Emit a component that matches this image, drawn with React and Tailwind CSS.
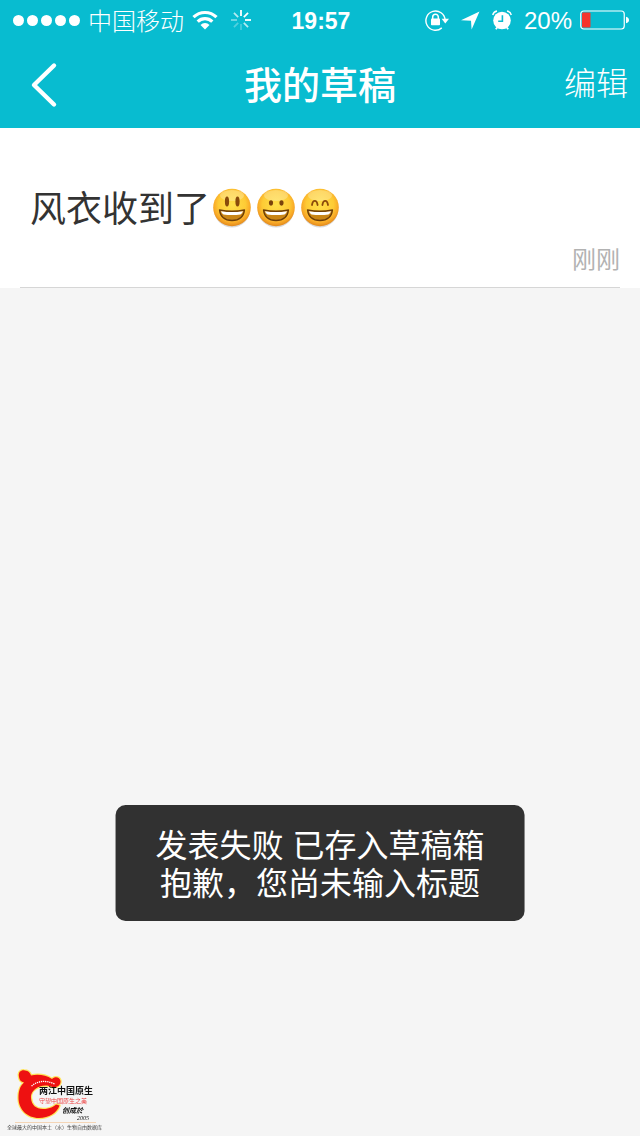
import React from 'react';

const drafts = [
  { id: 1, text: '风衣收到了', emojis: ['open', 'grin', 'smile'], time: '刚刚' },
];

const emojiNames = { open: '大笑', grin: '咧嘴笑', smile: '眯眼笑' };

const WifiIcon = () => (
  <svg viewBox="0 0 26 20" className="h-5 w-[26px]" fill="none" stroke="white" strokeWidth="3.2" aria-hidden="true">
    <path d="M1.5 7.2a16.4 16.4 0 0 1 23 0" />
    <path d="M5.7 11.6a10.4 10.4 0 0 1 14.6 0" />
    <path d="M13 19.5l-4.5-4.6a6.4 6.4 0 0 1 9 0z" fill="white" stroke="none" />
  </svg>
);

const spokes = [1, 1, 1, 0.7, 0.25, 0.3, 0.45, 0.7];

const Spinner = () => (
  <svg viewBox="0 0 22 22" className="size-[22px]" stroke="white" strokeWidth="1.8" aria-hidden="true">
    {spokes.map((opacity, i) => (
      <path key={i} d="M11 1v6" opacity={opacity} transform={`rotate(${i * 45} 11 11)`} />
    ))}
  </svg>
);

const RotationLockIcon = () => (
  <svg viewBox="0 0 24 22" className="h-[22px] w-6" fill="none" stroke="white" aria-hidden="true">
    <path d="M16.8 18.9A9.6 9.6 0 1 1 20.1 11" strokeWidth="1.4" />
    <path d="M16.6 9.8h7.4l-3.7 4.8z" fill="white" stroke="none" />
    <rect x="6" y="9.5" width="9" height="6.8" rx="0.8" fill="white" stroke="none" />
    <path d="M7.7 10V8a2.8 2.8 0 0 1 5.6 0v2" strokeWidth="1.5" />
  </svg>
);

const LocationIcon = () => (
  <svg viewBox="0 0 19 19" className="size-[19px]" fill="white" aria-hidden="true">
    <path d="M18.5.5L10.6 18.6 10 9.8 0 9.2z" />
  </svg>
);

const AlarmIcon = () => (
  <svg viewBox="0 0 20 20" className="size-5" fill="none" aria-hidden="true">
    <circle cx="10" cy="10.5" r="8.8" fill="white" />
    <path d="M10.4 5.2v6.1H6.2" stroke="#08bcd0" strokeWidth="1.6" />
    <path d="M.7 5Q1.4 1.7 5 .9M19.3 5Q18.6 1.7 15 .9" stroke="white" strokeWidth="1.5" />
    <path d="M5.4 17.2l-1.6 2.1M14.6 17.2l1.6 2.1" stroke="white" strokeWidth="1.8" />
  </svg>
);

const BatteryIcon = () => (
  <svg viewBox="0 0 49 20" className="h-5 w-[49px]" aria-hidden="true">
    <rect x="0.75" y="1" width="43.5" height="18" rx="3" fill="none" stroke="white" strokeWidth="1.2" />
    <rect x="2" y="2.5" width="8.5" height="15" rx="1" fill="#f5342b" />
    <path d="M46 6.7q3 .8 3 3.3t-3 3.3z" fill="white" />
  </svg>
);

const StatusBar = () => (
  <div className="grid h-10 grid-cols-[1fr_auto_1fr] items-center pr-[11px] pl-[13px]">
    <div className="flex items-center">
      <div className="flex gap-[3px]">
        {[1, 2, 3, 4, 5].map((dot) => (
          <span key={dot} className="size-[11px] rounded-full bg-white" />
        ))}
      </div>
      <span className="ml-2 pt-1 text-2xl font-light">中国移动</span>
      <div className="ml-2 flex items-center gap-3">
        <WifiIcon />
        <Spinner />
      </div>
    </div>
    <span className="pt-[2px] text-[23px] font-bold">19:57</span>
    <div className="flex items-center justify-end">
      <div className="flex items-center gap-3">
        <RotationLockIcon />
        <LocationIcon />
        <AlarmIcon />
        <span className="pt-[2px] text-2xl">20%</span>
      </div>
      <span className="ml-2">
        <BatteryIcon />
      </span>
    </div>
  </div>
);

const NavBar = () => (
  <div className="grid h-[88px] grid-cols-[1fr_auto_1fr] items-center px-3">
    <button type="button" aria-label="返回" className="justify-self-start pl-4">
      <svg viewBox="0 0 32 48" className="h-12 w-8" fill="none" stroke="white" strokeWidth="4.4" strokeLinecap="round" strokeLinejoin="round">
        <path d="M26 5.5L6 25l20 19.5" />
      </svg>
    </button>
    <h1 className="pt-1 text-[38px] font-medium">我的草稿</h1>
    <button type="button" className="justify-self-end text-[32px] font-light">
      编辑
    </button>
  </div>
);

const Emoji = ({ type }) => (
  <svg viewBox="0 0 44 44" className="size-11" role="img" aria-label={emojiNames[type]}>
    <defs>
      <radialGradient id={`face-${type}`} cx="0.5" cy="0.42" r="0.6">
        <stop offset="0" stopColor="#ffe04a" />
        <stop offset="0.6" stopColor="#fecb35" />
        <stop offset="0.8" stopColor="#f9ab28" />
        <stop offset="1" stopColor="#dc7f1a" />
      </radialGradient>
    </defs>
    <ellipse cx="22" cy="23.5" rx="18" ry="18" fill="#000" opacity="0.15" />
    <circle cx="22" cy="21.5" r="18.8" fill={`url(#face-${type})`} />
    <ellipse cx="22" cy="9.5" rx="12" ry="5.5" fill="#fff" opacity="0.25" />
    {type === 'open' && (
      <g fill="#8a4b0b">
        <ellipse cx="17" cy="15.5" rx="2.1" ry="5" />
        <ellipse cx="27.5" cy="15.5" rx="2.1" ry="5" />
      </g>
    )}
    {type === 'grin' && (
      <g fill="#7a430c">
        <ellipse cx="17" cy="17" rx="2.1" ry="2.7" />
        <ellipse cx="27.5" cy="17" rx="2.1" ry="2.7" />
      </g>
    )}
    {type === 'smile' && (
      <g fill="none" stroke="#8a4b0b" strokeWidth="1.8" strokeLinecap="round">
        <path d="M14 19q.6-4.2 2.8-4.2t2.8 4.2" />
        <path d="M24.4 19q.6-4.2 2.8-4.2t2.8 4.2" />
      </g>
    )}
    <path d="M9.5 24q12.500 2.5 25 0-1.3 10.5-12.5 10.5T9.5 24z" fill="#c98516" stroke="#6b3c08" strokeWidth="1.3" strokeLinejoin="round" />
    <path d="M11 25.200q11 1.7 22 0-.8 2.500-2.5 3.200-8.500 1.3-17 0-1.700-.7-2.500-3.200z" fill="#fff" />
  </svg>
);

const DraftItem = ({ draft }) => (
  <li className="bg-white px-5">
    <div className="border-b border-[#d6d6d6] pt-[52px] pb-2">
      <div className="flex items-center pl-[10px]">
        <p className="pt-1 text-4xl leading-[52px] text-[#333]">{draft.text}</p>
        {draft.emojis.map((type) => (
          <Emoji key={type} type={type} />
        ))}
      </div>
      <p className="pt-1 text-right text-2xl leading-[39px] text-[#b2b2b2]">{draft.time}</p>
    </div>
  </li>
);

// Shown after a post fails and is kept as a draft
const Toast = () => (
  <div
    role="status"
    className="fixed bottom-[215px] left-1/2 w-max -translate-x-1/2 rounded-[10px] bg-[#313131] px-10 pt-[22px] pb-[18px] text-center text-[32px] leading-[38px] text-white"
  >
    <p>发表失败 已存入草稿箱</p>
    <p>抱歉，您尚未输入标题</p>
  </div>
);

const Watermark = () => (
  <svg
    viewBox="0 0 108 68"
    className="fixed bottom-0 left-1 h-[68px] w-[108px] font-['Noto_Sans_CJK_SC',sans-serif]"
    role="img"
    aria-label="两江中国原生"
  >
    <path
      d="M15 9C14 4 17 2 20 2.300C23 2.500 26 4 27 7.500C34 6 42 7 48 11C51 8 56 9 56.500 13C57 17 53 20 48 19C45 17.500 40 17 36 18.500C30 20.500 26.500 25 27 30C27.500 37 32 41 39 41C46 41 50 38.500 52 36.500L55.500 37.500C53 45 45 50 35 50C23 50 14.500 41 14.500 30C14.500 23 16 18 20 14.500C17 14 15.500 12 15 9z"
      stroke="#ffe35a"
      strokeWidth="2.4"
      fill="#ee1111"
      strokeLinejoin="round"
      paintOrder="stroke"
    />
    <path d="M27.500 18Q37 10 50.500 16" fill="none" stroke="#fff" strokeWidth="1.300" strokeDasharray="1.300 .8" />
    <text x="35" y="26" fontSize="9" fontWeight="700" fill="#111">两江中国原生</text>
    <text x="35" y="35" fontSize="6" fill="#ee4444">守望中国原生之美</text>
    <text x="58" y="45" fontSize="7" fontStyle="italic" fontWeight="700" fill="#111">创成於</text>
    <text x="73" y="52" fontSize="6" fontStyle="italic" fill="#111" className="font-['Liberation_Serif',serif]">2005</text>
    <path d="M11 54.500h81" stroke="#f4c08c" strokeWidth="0.600" />
    <text x="3" y="61" fontSize="5" fill="#444">全球最大的中国本土（水）生物自由数据库</text>
  </svg>
);

export default function App() {
  return (
    <div className="min-h-screen bg-[#f5f5f5] font-['Liberation_Sans','Noto_Sans_CJK_SC',sans-serif]">
      <header className="bg-[#08bcd0] text-white">
        <StatusBar />
        <NavBar />
      </header>
      <main>
        <ul>
          {drafts.map((draft) => (
            <DraftItem key={draft.id} draft={draft} />
          ))}
        </ul>
      </main>
      <Toast />
      <Watermark />
    </div>
  );
}
